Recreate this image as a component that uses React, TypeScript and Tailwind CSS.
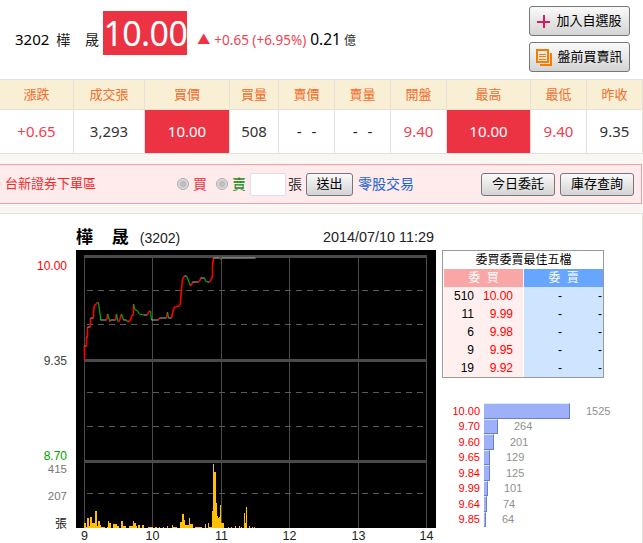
const QUOTE_CELLS = [
  { label: '漲跌', value: '+0.65', tone: 'red' },
  { label: '成交張', value: '3,293', tone: 'plain' },
  { label: '買價', value: '10.00', tone: 'hot' },
  { label: '買量', value: '508', tone: 'plain' },
  { label: '賣價', value: '- -', tone: 'dash' },
  { label: '賣量', value: '- -', tone: 'dash' },
  { label: '開盤', value: '9.40', tone: 'red' },
  { label: '最高', value: '10.00', tone: 'hot' },
  { label: '最低', value: '9.40', tone: 'red' },
  { label: '昨收', value: '9.35', tone: 'plain' },
]

const TONE_CLASS: Record<string, string> = {
  red: 'bg-white text-[#ee3f50]',
  plain: 'bg-white text-[#333]',
  hot: 'bg-[#ec3344] text-white',
  dash: 'bg-white text-[#222] [word-spacing:6px]',
}

const BEST_FIVE = [
  ['510', '10.00'],
  ['11', '9.99'],
  ['6', '9.98'],
  ['9', '9.95'],
  ['19', '9.92'],
]

const TOP_PRICES = [
  { price: '10.00', width: 86, volume: 1525 },
  { price: '9.70', width: 14, volume: 264 },
  { price: '9.60', width: 10, volume: 201 },
  { price: '9.65', width: 6, volume: 129 },
  { price: '9.84', width: 6, volume: 125 },
  { price: '9.99', width: 4, volume: 101 },
  { price: '9.64', width: 3, volume: 74 },
  { price: '9.85', width: 2, volume: 64 },
]

// price trace in page pixels, y offset by CHART_TOP when drawn
const TRACE: [number, number][] = [
  [84, 360], [84, 346], [86, 346], [86, 337], [87, 337], [87, 327], [90, 327], [90, 318], [93, 318],
  [93, 312], [94, 305], [96, 304], [97, 302], [98, 303], [99, 310], [100, 317], [100, 320], [106, 320],
  [107, 316], [107, 314], [109, 320], [109, 322], [110, 320], [115, 320], [116, 314], [117, 320],
  [118, 322], [120, 318], [121, 314], [123, 320], [126, 320], [127, 322], [130, 320], [131, 316],
  [132, 315], [133, 315], [133, 304], [134, 309], [137, 311], [139, 314], [143, 315], [147, 315],
  [148, 312], [150, 311], [151, 320], [158, 320], [159, 318], [166, 318], [167, 312], [168, 318],
  [171, 318], [172, 313], [173, 310], [174, 307], [179, 306], [180, 302], [181, 289], [182, 279],
  [184, 276], [186, 276], [187, 278], [188, 281], [189, 283], [190, 286], [192, 283], [192, 282],
  [198, 282], [199, 281], [200, 279], [200, 278], [204, 278], [205, 281], [207, 282], [209, 282],
  [210, 281], [212, 276], [212, 266], [213, 258], [219, 258], [220, 259], [221, 259], [221, 258], [255, 258],
]

// x, width, height of each volume bar
const VOLUME: [number, number, number][] = [
  [84, 2, 5], [86, 1, 1], [87, 2, 10], [89, 1, 2], [90, 2, 11], [92, 3, 5], [95, 2, 17], [97, 1, 2],
  [98, 2, 7], [100, 1, 3], [101, 4, 1], [107, 1, 1], [108, 1, 7], [109, 2, 5], [113, 2, 4], [115, 2, 4],
  [117, 2, 2], [121, 2, 7], [123, 1, 2], [124, 2, 2], [129, 4, 2], [133, 1, 7], [134, 2, 5], [136, 1, 2],
  [138, 2, 3], [142, 2, 3], [148, 5, 1], [155, 2, 1], [159, 1, 1], [163, 1, 1], [167, 1, 2], [172, 1, 3],
  [173, 4, 1], [180, 2, 6], [182, 2, 14], [184, 1, 8], [185, 1, 3], [186, 3, 3], [189, 1, 10], [190, 3, 4],
  [195, 7, 1], [205, 1, 4], [208, 1, 5], [209, 3, 1], [212, 1, 17], [213, 1, 64], [214, 2, 56], [216, 1, 25],
  [217, 1, 12], [218, 1, 10], [219, 1, 11], [220, 1, 23], [221, 3, 5], [228, 1, 1], [231, 1, 1], [235, 1, 2],
  [239, 1, 2], [241, 1, 1], [244, 1, 15], [245, 1, 5], [246, 1, 21], [249, 1, 2], [252, 1, 1], [254, 1, 1],
]

const CHART_TOP = 250
const GRID_X = [84, 152, 221, 289, 358, 426]

function traceColor(fromY: number, toY: number) {
  if (toY < fromY) return '#ff0000'
  if (toY > fromY) return '#00b000'
  return '#b4b4b4'
}

function traceWidth(fromY: number, toY: number) {
  if (toY < fromY) return 1.6
  if (toY > fromY) return 1.2
  return 1
}

function IntradayChart() {
  return (
    <svg width="436" height="293" viewBox="0 0 436 293" className="block shrink-0" shapeRendering="crispEdges">
      <rect x="76" y="0" width="360" height="278" fill="#000" />
      {GRID_X.map((x) => (
        <line key={x} x1={x + 0.5} x2={x + 0.5} y1="6" y2="278" stroke="#4a4a4a" strokeWidth="1" />
      ))}
      {[6, 110, 211].map((y) => (
        <rect key={y} x="84" y={y - 1} width="343" height="3" fill="#4a4a4a" />
      ))}
      {[40, 74, 142, 176, 243].map((y) => (
        <line key={y} x1="87" x2="427" y1={y + 0.5} y2={y + 0.5} stroke="#5a5a5a" strokeDasharray="6 5" />
      ))}
      {VOLUME.map(([x, w, h]) => (
        <rect key={x} x={x} y={278 - h} width={w} height={h} fill="#ffc000" />
      ))}
      {TRACE.slice(1).map(([x, y], i) => {
        const [px, py] = TRACE[i]
        return (
          <line
            key={i}
            x1={px + 0.5}
            y1={py - CHART_TOP}
            x2={x + 0.5}
            y2={y - CHART_TOP}
            stroke={traceColor(py, y)}
            strokeWidth={traceWidth(py, y)}
            shapeRendering="auto"
          />
        )
      })}
      <g fontSize="12" textAnchor="end" shapeRendering="auto">
        <text x="67" y="20" fill="#ff0000">10.00</text>
        <text x="67" y="115" fill="#444">9.35</text>
        <text x="67" y="210" fill="#00a000">8.70</text>
        <text x="67" y="223" fontSize="11.5" fill="#777">415</text>
        <text x="67" y="250" fontSize="11.5" fill="#777">207</text>
        <text x="67" y="278" fill="#222">張</text>
      </g>
      <g fontSize="12.5" textAnchor="middle" fill="#222" shapeRendering="auto">
        {GRID_X.map((x, i) => (
          <text key={x} x={x + 0.5} y="290">{i + 9}</text>
        ))}
      </g>
    </svg>
  )
}

function GradientButton({ children, className }: { children: React.ReactNode; className: string }) {
  return (
    <button
      type="button"
      className={`flex items-center justify-center rounded-[3px] border border-[#777] bg-gradient-to-b from-[#fafafa] to-[#d4d4d4] text-black ${className}`}
    >
      {children}
    </button>
  )
}

function OrderRadio({ label, color }: { label: string; color: string }) {
  return (
    <label className={`flex items-center gap-[4px] text-[14px] ${color}`}>
      <span className="size-[12px] rounded-full border border-[#aaa] bg-[radial-gradient(circle,#bdbdbd_35%,#ececec_75%)]" />
      {label}
    </label>
  )
}

function BestFive() {
  return (
    <div className="h-[128px] w-[162px] border border-[#999] pl-px text-[11px]">
      <div className="flex h-[18px] items-center justify-center text-[12px] text-black">委買委賣最佳五檔</div>
      <div className="grid grid-cols-[79px_79px] gap-x-px text-[12px] text-white [word-spacing:3px]">
        <div className="flex h-[18px] items-center justify-center bg-[#f9a6a6]">委 買</div>
        <div className="flex h-[18px] items-center justify-center bg-[#66a6ff]">委 賣</div>
        <div className="h-[90px] bg-[#ffefee]">
          {BEST_FIVE.map(([qty, price]) => (
            <div key={price} className="flex h-[18px] items-center">
              <span className="w-[30px] text-right text-black">{qty}</span>
              <span className="w-[39px] text-right text-[#ff0000]">{price}</span>
            </div>
          ))}
        </div>
        <div className="h-[90px] bg-[#cfe4ff]">
          {BEST_FIVE.map(([, price]) => (
            <div key={price} className="flex h-[18px] items-center text-black">
              <span className="w-[38px] text-right">-</span>
              <span className="w-[40px] text-right">-</span>
            </div>
          ))}
        </div>
      </div>
    </div>
  )
}

function TopPrices() {
  return (
    <div className="mt-[25px] text-[11px]">
      {TOP_PRICES.map((row) => (
        <div key={row.price} className="flex h-[15.5px] items-center">
          <span className="w-[38px] text-right text-[#ff0000]">{row.price}</span>
          <div
            className="ml-[4px] h-full border-t border-r border-b border-t-[#d4ecf7] border-r-[#6a7fc8] border-b-[#6a7fc8] bg-[#9fb0fb]"
            style={{ width: row.width }}
          />
          <span className="ml-[16px] text-[#8f8f8f]">{row.volume}</span>
        </div>
      ))}
    </div>
  )
}

export default function App() {
  return (
    <div className="h-[543px] w-[643px] overflow-hidden bg-[#f9f7f3] font-['Liberation_Sans','Noto_Sans_CJK_TC',sans-serif]">
      <header className="flex h-[79px] justify-between bg-white pr-[13px] font-['Noto_Sans','Noto_Sans_CJK_TC',sans-serif]">
        <div className="mt-[11px] flex h-[44px] items-end pl-[15px] leading-none">
          <span className="mb-[8px] text-[15px] text-black">3202</span>
          <span className="mb-[8px] ml-[7px] w-[47px] text-[14px] text-[#222] [word-spacing:11px]">樺 晟</span>
          <span className="flex h-[44px] w-[84px] items-center justify-center bg-[#ec3344] text-[34px] tracking-[-0.6px] text-white">
            10.00
          </span>
          <span className="mb-[9px] ml-[10px] text-[13px] text-[#ee3344]">▲</span>
          <span className="mb-[8px] ml-[4px] text-[13.5px] text-[#ee4455]">+0.65 (+6.95%)</span>
          <span className="mb-[8px] ml-[4px] text-[15.5px] text-black">0.21</span>
          <span className="mb-[8px] ml-[3px] text-[12px] text-[#333]">億</span>
        </div>
        <div className="flex flex-col gap-[6px] pt-[6px]">
          <GradientButton className="h-[30px] w-[101px] gap-[6px] text-[13px]">
            <svg width="13" height="13" viewBox="0 0 13 13" shapeRendering="crispEdges">
              <path d="M5.5 0h2v5.5H13v2H7.5V13h-2V7.5H0v-2h5.5z" fill="#d81b60" />
            </svg>
            加入自選股
          </GradientButton>
          <GradientButton className="h-[30px] w-[101px] gap-[4px] text-[13px]">
            <svg width="17" height="17" viewBox="0 0 17 17" fill="none" stroke="#f57c00" strokeWidth="2" shapeRendering="crispEdges">
              <rect x="1" y="1" width="11" height="12" />
              <path d="M3 5h7M3 7.5h7M3 10h7" strokeWidth="1" />
              <path d="M15 4v12H4" />
            </svg>
            盤前買賣訊
          </GradientButton>
        </div>
      </header>

      <section className="grid grid-cols-[74px_71px_85px_49px_56px_56px_56px_84px_56px_56px] border-y border-[#e5e1d8] font-['Noto_Sans','Noto_Sans_CJK_TC',sans-serif]">
        {QUOTE_CELLS.map((cell) => (
          <div key={cell.label} className="flex h-[30px] items-center justify-center border-r border-b border-[#e5e1d8] bg-[#f9efd5] text-[13px] text-[#f26c2a]">
            {cell.label}
          </div>
        ))}
        {QUOTE_CELLS.map((cell, i) => (
          <div
            key={i}
            className={`flex h-[43px] items-center justify-center border-r border-[#e5e1d8] text-[15px] ${TONE_CLASS[cell.tone]}`}
          >
            {cell.value}
          </div>
        ))}
      </section>

      <section className="mt-[10px] flex h-[40px] w-[642px] items-center border-y border-r border-[#f99ca4] bg-[#ffeaec] pl-[5px] text-[13px]">
        <span className="w-[172px] text-[#f22a2a]">台新證券下單區</span>
        <OrderRadio label="買" color="text-[#ee3344]" />
        <div className="w-[9px]" />
        <OrderRadio label="賣" color="text-[#1a8a1a]" />
        <input className="ml-[4px] h-[23px] w-[36px] rounded-[2px] border border-[#dde] bg-white" />
        <span className="ml-[2px] w-[18px] text-[14px] text-[#333]">張</span>
        <GradientButton className="h-[23px] w-[47px]">送出</GradientButton>
        <a className="ml-[5px] w-[123px] text-[14px] text-[#2266cc]">零股交易</a>
        <GradientButton className="h-[23px] w-[74px]">今日委託</GradientButton>
        <GradientButton className="ml-[5px] h-[23px] w-[74px]">庫存查詢</GradientButton>
      </section>

      <section className="mt-[9px] h-[330px] border-t border-r border-[#e5e1d8] bg-white">
        <div className="flex h-[36px] w-[436px] items-center justify-between pl-[76px] pt-[12px] text-[#222]">
          <div className="flex items-center gap-[11px]">
            <span className="text-[17px] font-bold text-black [word-spacing:14px]">樺 晟</span>
            <span className="text-[14px]">(3202)</span>
          </div>
          <span className="pr-[2px] text-[14.4px]">2014/07/10 11:29</span>
        </div>
        <div className="flex">
          <IntradayChart />
          <div className="ml-[6px]">
            <BestFive />
            <TopPrices />
          </div>
        </div>
      </section>
    </div>
  )
}
